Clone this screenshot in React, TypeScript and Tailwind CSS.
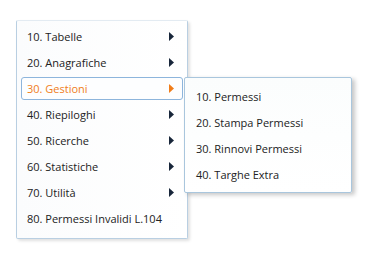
const mainItems = [
  { label: '10. Tabelle', sub: true },
  { label: '20. Anagrafiche', sub: true },
  { label: '30. Gestioni', sub: true, active: true },
  { label: '40. Riepiloghi', sub: true },
  { label: '50. Ricerche', sub: true },
  { label: '60. Statistiche', sub: true },
  { label: '70. Utilità', sub: true },
  { label: '80. Permessi Invalidi L.104', sub: false },
];

const subItems = ['10. Permessi', '20. Stampa Permessi', '30. Rinnovi Permessi', '40. Targhe Extra'];

// Small filled triangle used as submenu indicator
function Arrow({ active }: { active?: boolean }) {
  return (
    <svg width="5" height="9" viewBox="0 0 5 9" className="shrink-0">
      <path d="M0 0 L5 4.5 L0 9 Z" fill={active ? '#f07d1a' : '#18263a'} />
    </svg>
  );
}

export default function App() {
  return (
    <div
      className="relative w-[383px] h-[268px] bg-white pt-[20px] pl-[16px] text-[11px] text-[#222]"
      style={{ fontFamily: '"Open Sans", "Noto Sans", sans-serif' }}
    >
      {/* Main menu */}
      <div className="w-[172px] h-[219px] flex flex-col gap-[3px] px-[4px] pt-[4px] pb-[7px] rounded-[2px] border border-[#b9cfe2] border-t-[#e3ebf2] bg-gradient-to-r from-[#fbfcfd] to-white shadow-[2px_2px_3px_rgba(0,0,0,0.12)]">
        {mainItems.map((item) => (
          <div
            key={item.label}
            className={`h-[23px] shrink-0 flex items-center justify-between pl-[5px] pr-[8px] rounded-[3px] border ${
              item.active ? 'border-[#8db5dc] text-[#f07d1a] bg-[#fdfeff]' : 'border-transparent'
            }`}
          >
            <span className="whitespace-nowrap leading-none">{item.label}</span>
            {item.sub && <Arrow active={item.active} />}
          </div>
        ))}
      </div>

      {/* Submenu for 30. Gestioni */}
      <div className="absolute left-[184px] top-[77px] w-[168px] h-[116px] flex flex-col px-[4px] pt-[5px] pb-[7px] rounded-[2px] border border-[#a9c6dd] bg-gradient-to-b from-[#fbfdfd] to-white shadow-[3px_2px_4px_rgba(0,0,0,0.22)]">
        {subItems.map((label) => (
          <div key={label} className="h-[26px] shrink-0 flex items-center pl-[6px] border border-transparent">
            <span className="whitespace-nowrap leading-none">{label}</span>
          </div>
        ))}
      </div>
    </div>
  );
}
